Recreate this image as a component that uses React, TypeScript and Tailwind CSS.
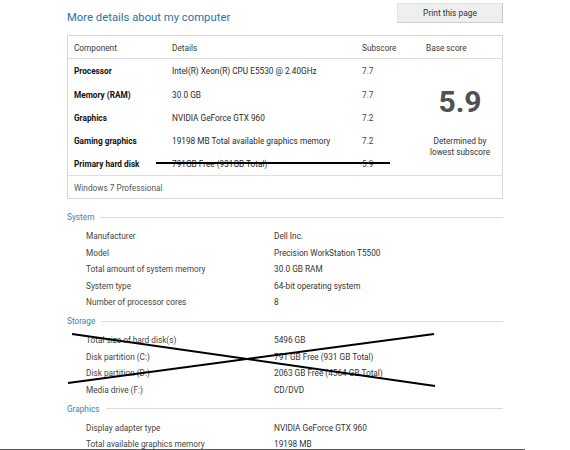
import React from "react";

const scores = [
  { name: "Processor", detail: "Intel(R) Xeon(R) CPU E5530 @ 2.40GHz", sub: "7.7" },
  { name: "Memory (RAM)", detail: "30.0 GB", sub: "7.7" },
  { name: "Graphics", detail: "NVIDIA GeForce GTX 960", sub: "7.2" },
  { name: "Gaming graphics", detail: "19198 MB Total available graphics memory", sub: "7.2" },
  { name: "Primary hard disk", detail: "791GB Free (931GB Total)", sub: "5.9" },
];

const sections = [
  {
    title: "System",
    rows: [
      ["Manufacturer", "Dell Inc."],
      ["Model", "Precision WorkStation T5500"],
      ["Total amount of system memory", "30.0 GB RAM"],
      ["System type", "64-bit operating system"],
      ["Number of processor cores", "8"],
    ],
  },
  {
    title: "Storage",
    rows: [
      ["Total size of hard disk(s)", "5496 GB"],
      ["Disk partition (C:)", "791 GB Free (931 GB Total)"],
      ["Disk partition (D:)", "2063 GB Free (4564 GB Total)"],
      ["Media drive (F:)", "CD/DVD"],
    ],
  },
  {
    title: "Graphics",
    rows: [
      ["Display adapter type", "NVIDIA GeForce GTX 960"],
      ["Total available graphics memory", "19198 MB"],
    ],
  },
];

export default function App() {
  return (
    <div className="relative w-[570px] h-[450px] overflow-hidden bg-white font-['Roboto','Open_Sans',sans-serif] text-[#3a3a3a]">
      <div className="ml-[67px] w-[436px]">
        {/* header */}
        <div className="flex justify-between h-[35px]">
          <h1 className="mt-[9px] text-[11.3px] leading-[18px] text-[#2a72a8]">More details about my computer</h1>
          <button className="mt-[3px] h-[20px] w-[106px] pt-px bg-[#efefef] border border-[#e2e2e2] border-r-[#c4c4c4] border-b-[#cfcfcf] text-[8.4px] text-[#333]">
            Print this page
          </button>
        </div>

        {/* score table */}
        <div className="border border-[#d6d6d6]">
          <div className="grid grid-cols-[104px_190px_64px_1fr] h-[23px] pt-[3px] items-center border-b border-[#dedede] text-[8.25px] text-[#3a3a3a]">
            <span className="pl-[6px]">Component</span>
            <span>Details</span>
            <span>Subscore</span>
            <span>Base score</span>
          </div>
          <div className="flex border-b border-[#dedede]">
            <div className="w-[358px]">
              {scores.map((s) => (
                <div key={s.name} className="grid grid-cols-[104px_190px_64px] h-[23.2px] pt-[2px] items-center text-[8.25px]">
                  <span className="pl-[6px] font-bold text-[#111]">{s.name}</span>
                  <span className="text-[#2a2a2a]">{s.detail}</span>
                  <span className="text-[#444]">{s.sub}</span>
                </div>
              ))}
            </div>
            <div className="flex-1 flex flex-col items-center pr-[8px]">
              <span className="mt-[28px] text-[30px] leading-[30px] font-bold text-[#505050]">5.9</span>
              <span className="mt-[19px] whitespace-nowrap text-center text-[8.25px] leading-[11px] text-[#333]">
                Determined by
                <br />
                lowest subscore
              </span>
            </div>
          </div>
          <div className="h-[22px] pt-[2px] flex items-center pl-[6px] text-[8.25px] text-[#555]">Windows 7 Professional</div>
        </div>

        {/* detail sections */}
        <div className="mt-[7px]">
          {sections.map((sec) => (
            <div key={sec.title}>
              <div className="h-[21.5px] pt-[1px] flex items-center gap-[6px]">
                <span className="text-[8.25px] text-[#3a84b4]">{sec.title}</span>
                <div className="flex-1 h-px bg-[#dcdcdc]" />
              </div>
              {sec.rows.map(([label, value]) => (
                <div key={label} className="h-[16.5px] pt-[1px] flex items-center text-[8.25px] text-[#444]">
                  <span className="pl-[19px] w-[207px]">{label}</span>
                  <span className="text-[#333]">{value}</span>
                </div>
              ))}
            </div>
          ))}
        </div>
      </div>

      {/* hand-drawn strike marks */}
      <svg className="absolute left-0 top-0 pointer-events-none" width="570" height="450">
        <line x1="156" y1="163" x2="390" y2="163" stroke="#000" strokeWidth="2" />
        <line x1="72" y1="334" x2="435" y2="386" stroke="#000" strokeWidth="2" />
        <line x1="68" y1="383" x2="434" y2="334" stroke="#000" strokeWidth="2" />
      </svg>
      <div className="absolute left-0 bottom-0 w-[525px] h-px bg-[#5a5a5a]" />
    </div>
  );
}
